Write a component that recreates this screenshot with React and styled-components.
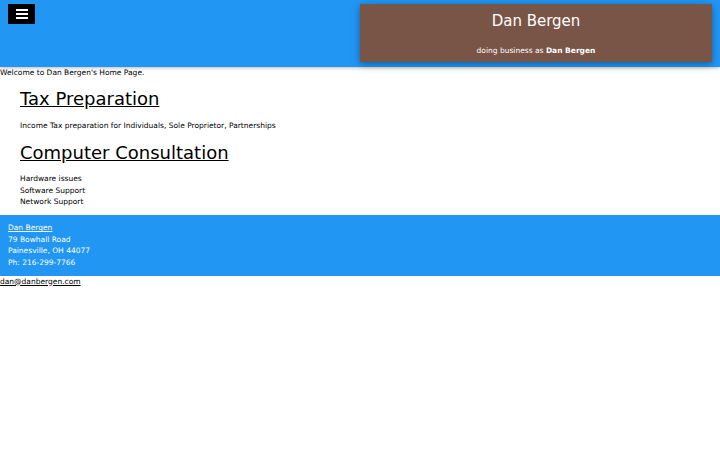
import React from "react";
import styled, { createGlobalStyle } from "styled-components";

const Global = createGlobalStyle`
  html, body { margin: 0; padding: 0; background: #fff; }
  body {
    font-family: "DejaVu Sans", Verdana, sans-serif;
    font-size: 7.5px;
    line-height: 11.4px;
    color: #000;
  }
`;

const Header = styled.header`
  display: flex;
  align-items: flex-start;
  height: 67px;
  box-sizing: border-box;
  padding: 4px 8px 0 8px;
  background: #2196f3;
  box-shadow: 0 1px 2.5px rgba(0, 0, 0, 0.16), 0 1px 5px rgba(0, 0, 0, 0.12);
  position: relative;
  z-index: 1;
`;

const MenuButton = styled.button`
  display: flex;
  align-items: center;
  justify-content: center;
  width: 27px;
  height: 20px;
  padding: 0;
  border: none;
  background: #000;
  cursor: pointer;
`;

const Card = styled.div`
  margin-left: auto;
  width: 352px;
  height: 58px;
  box-sizing: border-box;
  background: #795548;
  color: #fff;
  text-align: center;
  box-shadow: 0 2px 5px 0 rgba(0, 0, 0, 0.2), 0 2px 10px 0 rgba(0, 0, 0, 0.19);
  overflow: hidden;
`;

const CardTitle = styled.h2`
  margin: 6px 0 0;
  font-size: 15px;
  font-weight: 400;
  line-height: 22.5px;
`;

const CardSub = styled.p`
  margin: 12px 0 0;
  font-size: 7.5px;
  line-height: 11.4px;
  b { font-weight: 700; }
`;

const Welcome = styled.div`
  line-height: 11.4px;
`;

const Content = styled.main`
  padding: 0 20px;
`;

const SectionTitle = styled.h1`
  margin: 6.5px 0;
  font-size: 18px;
  font-weight: 400;
  line-height: 27px;
  a { color: #000; text-decoration: underline; }
`;

const Para = styled.p`
  margin: 7.6px 0;
  line-height: 11.4px;
`;

const Footer = styled.footer`
  background: #2196f3;
  color: #fff;
  padding: 7.5px 8px;
  line-height: 11.4px;
  a { color: #fff; text-decoration: underline; }
`;

const Line = styled.div``;

const Email = styled.a`
  display: block;
  color: #000;
  line-height: 11.4px;
  text-decoration: underline;
`;

const Hamburger = () => (
  <svg width="12" height="10" viewBox="0 0 12 10">
    <rect x="0" y="0" width="12" height="2" fill="#fff" />
    <rect x="0" y="4" width="12" height="2" fill="#fff" />
    <rect x="0" y="8" width="12" height="2" fill="#fff" />
  </svg>
);

export default function App() {
  return (
    <>
      <Global />
      <Header>
        <MenuButton aria-label="menu">
          <Hamburger />
        </MenuButton>
        <Card>
          <CardTitle>Dan Bergen</CardTitle>
          <CardSub>
            doing business as <b>Dan Bergen</b>
          </CardSub>
        </Card>
      </Header>
      <Welcome>Welcome to Dan Bergen's Home Page.</Welcome>
      <Content>
        <SectionTitle>
          <a href="#tax">Tax Preparation</a>
        </SectionTitle>
        <Para>Income Tax preparation for Individuals, Sole Proprietor, Partnerships</Para>
        <SectionTitle>
          <a href="#computer">Computer Consultation</a>
        </SectionTitle>
        <Para>
          Hardware issues
          <br />
          Software Support
          <br />
          Network Support
        </Para>
      </Content>
      <Footer>
        <Line>
          <a href="#home">Dan Bergen</a>
        </Line>
        <Line>79 Bowhall Road</Line>
        <Line>Painesville, OH 44077</Line>
        <Line>Ph: 216-299-7766</Line>
      </Footer>
      <Email href="mailto:dan@danbergen.com">dan@danbergen.com</Email>
    </>
  );
}
